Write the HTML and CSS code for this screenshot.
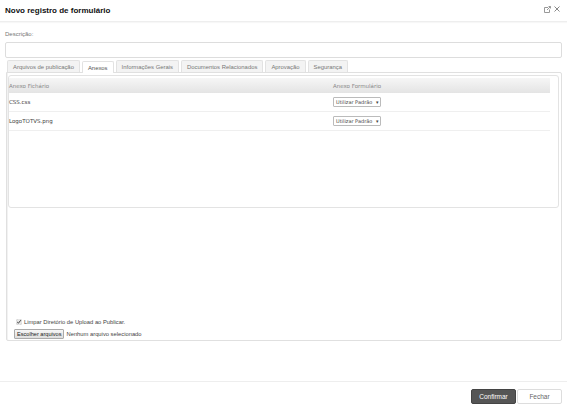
FILE: index.html
```html
<!DOCTYPE html>
<html lang="pt-BR">
<head>
  <meta charset="UTF-8">
  <meta name="viewport" content="width=device-width, initial-scale=1.0">
  <title>Novo registro de formulário</title>
  <link rel="stylesheet" href="styles.css">
</head>
<body>

  <div class="modal">
    <div class="modal-header">
      <h1>Novo registro de formulário</h1>
      <div class="acoes">
        <svg width="7" height="7" viewBox="0 0 7 7">
          <path d="M0.5 1.5 H4 M0.5 1.5 V6.5 H5.5 V3.5" fill="none" stroke="#999" stroke-width="1"/>
          <path d="M3 4 L6.5 0.5 M4.5 0.5 H6.5 V2.5" fill="none" stroke="#999" stroke-width="1"/>
        </svg>
        <svg width="6" height="6" viewBox="0 0 6 6">
          <path d="M0.5 0.5 L5.5 5.5 M5.5 0.5 L0.5 5.5" stroke="#888" stroke-width="1"/>
        </svg>
      </div>
    </div>

    <div class="modal-body">
      <label class="rotulo">Descrição:</label>
      <input class="campo" type="text">

      <ul class="abas">
        <li>Arquivos de publicação</li>
        <li class="ativa">Anexos</li>
        <li>Informações Gerais</li>
        <li>Documentos Relacionados</li>
        <li>Aprovação</li>
        <li>Segurança</li>
      </ul>

      <div class="painel">
        <div class="grade">
          <div class="grade-topo">
            <span class="col-arquivo">Anexo Fichário</span>
            <span class="col-form">Anexo Formulário</span>
          </div>
          <div class="linha">
            <span class="col-arquivo">CSS.css</span>
            <span class="col-form"><span class="seletor">Utilizar Padrão <i>▾</i></span></span>
          </div>
          <div class="linha">
            <span class="col-arquivo">LogoTOTVS.png</span>
            <span class="col-form"><span class="seletor">Utilizar Padrão <i>▾</i></span></span>
          </div>
        </div>

        <div class="opcoes">
          <label class="check"><input type="checkbox" checked> Limpar Diretório de Upload ao Publicar.</label>
          <div class="upload">
            <button class="botao-arquivo">Escolher arquivos</button>
            <span>Nenhum arquivo selecionado</span>
          </div>
        </div>
      </div>
    </div>

    <div class="modal-footer">
      <button class="botao-confirmar">Confirmar</button>
      <button class="botao-fechar">Fechar</button>
    </div>
  </div>

</body>
</html>
```

FILE: styles.css
```css
* {
  margin: 0;
  padding: 0;
  box-sizing: border-box;
}

body {
  font-family: "Liberation Sans", Arial, sans-serif;
  background-color: #ffffff;
  color: #333;
}

.modal {
  height: 408px;
  display: flex;
  flex-direction: column;
}

.modal-header {
  height: 22px;
  display: flex;
  justify-content: space-between;
  align-items: center;
  padding: 0 7px 0 5px;
  border-bottom: 1px solid #eeeeee;
  box-shadow: 0 1px 1px rgba(0, 0, 0, 0.03);
}

.modal-header h1 {
  font-size: 8px;
  font-weight: bold;
  color: #111;
}

.modal-header .acoes {
  display: flex;
  gap: 3px;
  align-items: center;
  margin-top: -3px;
}

.modal-body {
  flex: 1;
  padding: 8px 5px 0 5px;
}

.rotulo {
  display: block;
  font-size: 6px;
  color: #777;
  margin-top: 1px;
  margin-bottom: 5px;
}

.campo {
  display: block;
  width: 100%;
  height: 16px;
  border: 1px solid #dddddd;
  border-radius: 2px;
}

.abas {
  list-style: none;
  display: flex;
  gap: 2px;
  padding-left: 2px;
  margin-top: 2px;
}

.abas li {
  font-size: 5.9px;
  color: #777;
  background-color: #f3f3f3;
  border: 1px solid #e2e2e2;
  border-bottom: none;
  padding: 3px 5px 2px 5px;
  height: 12px;
  border-radius: 2px 2px 0 0;
}

.abas li.ativa {
  background-color: #fff;
  color: #555;
  position: relative;
  top: 1px;
}

.painel {
  border: 1px solid #e0e0e0;
  border-radius: 0 2px 2px 2px;
  margin-left: 1px;
  height: 269px;
  padding: 2px 2px 0 1px;
  display: flex;
  flex-direction: column;
  justify-content: space-between;
  box-shadow: inset 1px 0 0 #f2f2f2;
}

.grade {
  height: 133px;
  border: 1px solid #e3e3e3;
  border-radius: 3px;
  padding: 2px 8px 0 0;
  font-family: "DejaVu Sans", Verdana, sans-serif;
}

.grade-topo,
.linha {
  display: flex;
  align-items: center;
  font-size: 5.5px;
}

.grade-topo {
  height: 15px;
  background: linear-gradient(#f6f6f6, #e4e4e4);
  color: #888;
}

.linha {
  height: 19px;
  border-bottom: 1px solid #efefef;
  color: #444;
}

.col-arquivo {
  width: 324px;
  padding-left: 0;
}

.seletor {
  display: inline-block;
  border: 1px solid #bbb;
  border-radius: 1px;
  padding: 1px 2px;
  font-size: 5px;
  color: #444;
  background: #fff;
}

.seletor i {
  font-style: normal;
  font-size: 5px;
  margin-left: 2px;
}

.opcoes {
  padding: 0 0 1px 6px;
  font-size: 5.8px;
  color: #444;
}

.check {
  display: flex;
  align-items: center;
  gap: 2px;
  margin-bottom: 4px;
}

.check input {
  width: 6px;
  height: 6px;
  margin-left: 2px;
  accent-color: #e6e6e6;
}

.upload {
  display: flex;
  align-items: center;
  gap: 2px;
}

.botao-arquivo {
  font-family: "Liberation Sans", Arial, sans-serif;
  font-size: 5.6px;
  color: #222;
  padding: 1px 2px;
  height: 10px;
  border: 1px solid #aaa;
  border-radius: 1px;
  background: linear-gradient(#f6f6f6, #dedede);
}

.modal-footer {
  height: 27px;
  border-top: 1px solid #eeeeee;
  display: flex;
  justify-content: flex-end;
  align-items: flex-start;
  gap: 1px;
  padding: 7px 5px 0 0;
}

.botao-confirmar,
.botao-fechar {
  width: 45px;
  height: 15px;
  font-family: "Liberation Sans", Arial, sans-serif;
  font-size: 6.5px;
  border-radius: 2px;
  cursor: pointer;
}

.botao-confirmar {
  background-color: #555555;
  color: #fff;
  border: 1px solid #444;
}

.botao-fechar {
  background-color: #fff;
  color: #666;
  border: 1px solid #ddd;
}
```
